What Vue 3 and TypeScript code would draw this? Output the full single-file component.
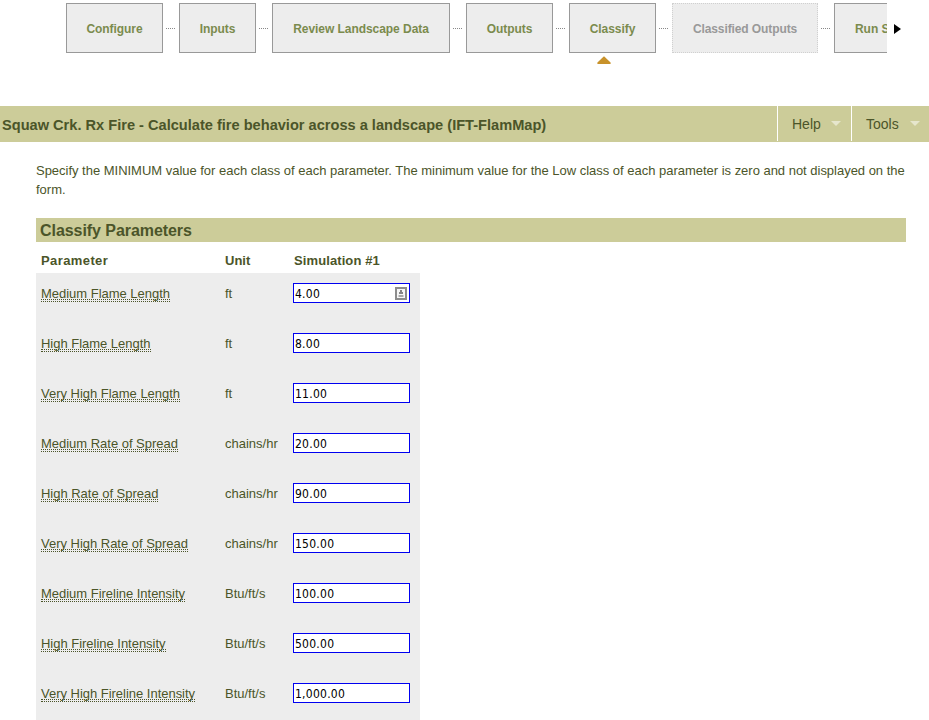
<script setup lang="ts">
import { ref } from 'vue'

interface Step {
  label: string
  size: string
  disabled?: boolean
  current?: boolean
}

interface Row {
  label: string
  unit: string
  value: string
}

const steps: Step[] = [
  { label: 'Configure', size: 'w97' },
  { label: 'Inputs', size: 'w77' },
  { label: 'Review Landscape Data', size: 'w178' },
  { label: 'Outputs', size: 'w87' },
  { label: 'Classify', size: 'w87', current: true },
  { label: 'Classified Outputs', size: 'w146', disabled: true },
  { label: 'Run S', size: 'last' },
]

const menus: string[] = ['Help', 'Tools']

const rows = ref<Row[]>([
  { label: 'Medium Flame Length', unit: 'ft', value: '4.00' },
  { label: 'High Flame Length', unit: 'ft', value: '8.00' },
  { label: 'Very High Flame Length', unit: 'ft', value: '11.00' },
  { label: 'Medium Rate of Spread', unit: 'chains/hr', value: '20.00' },
  { label: 'High Rate of Spread', unit: 'chains/hr', value: '90.00' },
  { label: 'Very High Rate of Spread', unit: 'chains/hr', value: '150.00' },
  { label: 'Medium Fireline Intensity', unit: 'Btu/ft/s', value: '100.00' },
  { label: 'High Fireline Intensity', unit: 'Btu/ft/s', value: '500.00' },
  { label: 'Very High Fireline Intensity', unit: 'Btu/ft/s', value: '1,000.00' },
])
</script>

<template>
  <div class="page">
    <nav class="workflow">
      <div class="steps">
        <template v-for="(step, i) in steps" :key="step.label">
          <span v-if="i > 0" class="link"></span>
          <div class="step" :class="[step.size, { disabled: step.disabled }]">
            <span>{{ step.label }}</span>
            <svg v-if="step.current" class="marker" width="14" height="8" viewBox="0 0 14 8">
              <path d="M7 0.3L13.6 6.6V8H0.4V6.6Z" fill="#c8922b" />
            </svg>
          </div>
        </template>
      </div>
      <svg class="next" width="7" height="10" viewBox="0 0 7 10">
        <path d="M0 0L7 5L0 10Z" fill="#000" />
      </svg>
    </nav>

    <header class="titlebar">
      <h1>Squaw Crk. Rx Fire - Calculate fire behavior across a landscape (IFT-FlamMap)</h1>
      <div v-for="menu in menus" :key="menu" class="menu">
        <span>{{ menu }}</span>
        <svg width="10" height="5" viewBox="0 0 10 5"><path d="M0 0H10L5 5Z" fill="#e6e6cc" /></svg>
      </div>
    </header>

    <main>
      <p class="intro">
        <span class="line first">Specify the MINIMUM value for each class of each parameter. The minimum value for the Low class of each parameter is zero and not displayed on the</span>
        <span class="line">form.</span>
      </p>
      <h2>Classify Parameters</h2>
      <div class="table">
        <div class="row head">
          <span class="wide">Parameter</span><span>Unit</span><span class="sim">Simulation #1</span>
        </div>
        <div v-for="(row, i) in rows" :key="row.label" class="row">
          <span class="label"><span class="term"><span>{{ row.label }}</span></span></span>
          <span class="unit">{{ row.unit }}</span>
          <div class="field">
            <input v-model="row.value" type="text" />
            <svg v-if="i === 0" width="12" height="13" viewBox="0 0 12 13">
              <rect x="1" y="1" width="10" height="11" fill="#f6f6f6" stroke="#8c8c8c" stroke-width="2" />
              <path d="M5 3H7V5H8V7H4V5H5Z" fill="#858585" />
              <path d="M3.5 8H8.5V10H3.5Z" fill="#a8a8a8" />
            </svg>
          </div>
        </div>
      </div>
    </main>
  </div>
</template>

<style>
body {
  margin: 0;
  background: #fff;
}
</style>

<style scoped>
* {
  box-sizing: border-box;
}
.page {
  width: 929px;
  height: 720px;
  overflow: hidden;
  font-family: 'Liberation Sans', Arial, sans-serif;
  font-size: 13px;
  color: #4b5529;
}
.workflow {
  display: flex;
  align-items: flex-start;
  height: 106px;
  padding: 3px 0 0 66px;
}
.steps {
  display: flex;
  align-items: flex-start;
  width: 821px;
  height: 80px;
  overflow: hidden;
}
.step {
  position: relative;
  display: flex;
  flex: none;
  align-items: center;
  justify-content: center;
  height: 50px;
  padding-top: 2px;
  border: 1px solid #999;
  background: #ededed;
  color: #7b8b4d;
  font-size: 12px;
  font-weight: bold;
  letter-spacing: -0.05px;
  white-space: nowrap;
}
.disabled {
  border: 1px dotted #d0d0d0;
  color: #999;
  letter-spacing: -0.1px;
}
.w77 { width: 77px; }
.w87 { width: 87px; }
.w97 { width: 97px; }
.w146 { width: 146px; }
.w178 { width: 178px; }
.last {
  width: 53px;
  justify-content: flex-start;
  padding-left: 20px;
  border-right: 0;
}
.link {
  flex: none;
  width: 9px;
  margin: 25px 4px 0 3px;
  border-top: 1px dotted #888;
}
.marker {
  position: absolute;
  left: 27px;
  top: 52px;
}
.next {
  margin: 21px 0 0 7px;
}
.titlebar {
  display: flex;
  height: 36px;
  background: #cccc99;
}
h1 {
  flex: 1;
  margin: 0;
  padding: 2px 0 0 2px;
  font-size: 14.6px;
  line-height: 35px;
  white-space: nowrap;
}
.menu {
  display: flex;
  align-items: center;
  justify-content: space-between;
  width: 74px;
  height: 35px;
  padding: 0 10px 0 14px;
  border-left: 1px solid #fff;
  font-size: 14px;
}
.menu:last-child {
  width: 78px;
  padding-right: 9px;
}
main {
  padding: 19px 23px 0 36px;
}
.intro {
  margin: 0;
  height: 57px;
  line-height: 19px;
}
.line {
  display: block;
  white-space: nowrap;
}
.first {
  letter-spacing: -0.017px;
}
h2 {
  margin: 0;
  height: 24px;
  padding-left: 4px;
  background: #cccc99;
  font-size: 16px;
  line-height: 25px;
  letter-spacing: -0.06px;
}
.table {
  width: 384px;
}
.row {
  display: grid;
  grid-template-columns: 184px 68px 117px;
  height: 50px;
  padding-left: 5px;
  background: #ededed;
  line-height: 15px;
}
.head {
  height: 31px;
  padding-top: 11px;
  background: #fff;
  font-weight: bold;
}
.wide {
  letter-spacing: 0.4px;
}
.sim {
  padding-left: 1px;
  letter-spacing: 0.1px;
}
.label,
.unit {
  padding-top: 13px;
}
.label {
  letter-spacing: -0.02px;
}
.term {
  display: inline-block;
  border-bottom: 1px dotted #4b5529;
}
.term > span {
  display: block;
  height: 14px;
  margin-bottom: 1px;
  border-bottom: 1px dotted #4b5529;
}
.field {
  position: relative;
  padding-top: 10px;
}
input {
  display: block;
  width: 117px;
  height: 20px;
  margin: 0;
  padding: 1px 1px 0;
  border: 1px solid #0000f0;
  border-radius: 0;
  background: #fff;
  color: #000;
  font-family: 'DejaVu Sans Condensed', 'DejaVu Sans', sans-serif;
  font-stretch: condensed;
  font-size: 12px;
  letter-spacing: 0.25px;
}
.field svg {
  position: absolute;
  left: 102px;
  top: 14px;
}
</style>
